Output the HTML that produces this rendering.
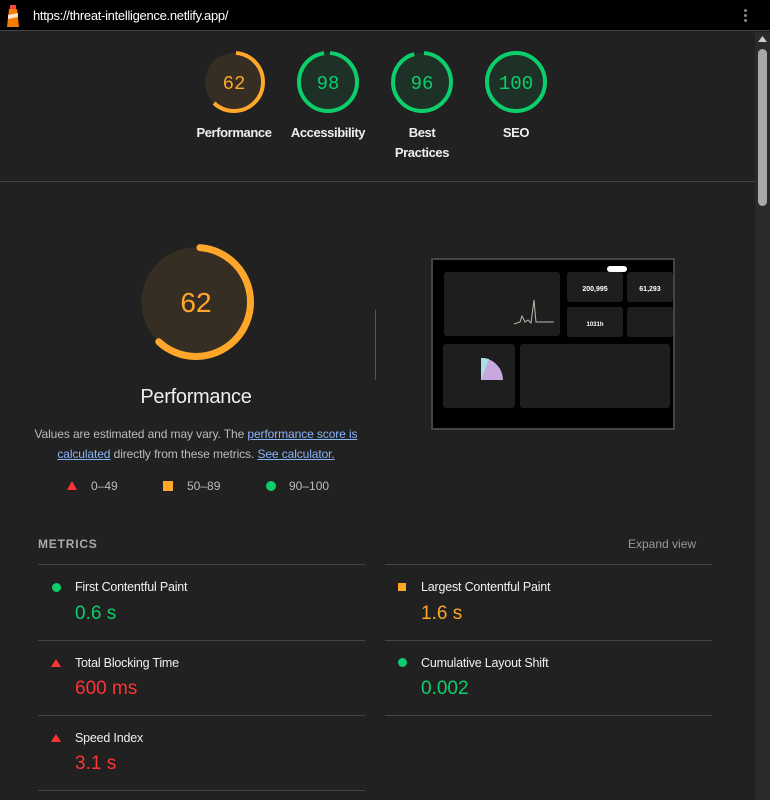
<!DOCTYPE html>
<html><head><meta charset="utf-8"><style>
*{margin:0;padding:0;box-sizing:border-box}
body{width:770px;height:800px;overflow:hidden;background:#212121;font-family:"Liberation Sans",sans-serif;color:#e8eaed;position:relative}
.a{position:absolute}
.top{left:0;top:0;width:770px;height:31px;background:#000;border-bottom:1px solid #444}
.lbl{font-size:13px;color:#eee;text-align:center;width:90px;line-height:20px;font-weight:bold;letter-spacing:-.4px}
.ml{font-size:12.5px;color:#f0f0f0;letter-spacing:-.2px}
.mv{font-size:19px}
.hr{height:1px;background:#444}
a{color:#8ab4f8;text-decoration:underline}
</style></head><body>
<div class="a top">
<svg class="a" style="left:6px;top:5px" width="14" height="22" viewBox="0 0 14 22"><rect x="4" y="0" width="6" height="4" fill="#f44"/><polygon points="3,4 11,4 13,22 1,22" fill="#f57c00"/><polygon points="2,10 12,8 12,12 2,14" fill="#fff" opacity=".8"/></svg>
<div class="a" style="left:33px;top:8px;font-size:13px;color:#fff;letter-spacing:-.3px">https://threat-intelligence.netlify.app/</div>
<div class="a" style="left:744px;top:9px;width:3px;height:3px;border-radius:2px;background:#888;box-shadow:0 5px 0 #888,0 10px 0 #888"></div>
</div>
<div class="a" style="left:755px;top:32px;width:15px;height:768px;background:#2a2a2a"></div>
<div class="a" style="left:758px;top:49px;width:9px;height:157px;border-radius:5px;background:#a8a8a8"></div>
<svg class="a" style="left:757px;top:35px" width="11" height="8"><polygon points="5.5,1 10,7 1,7" fill="#ccc"/></svg>

<svg class="a" style="left:0;top:0" width="755" height="400">
<g transform="rotate(-90 234 82)"><circle cx="234" cy="82" r="29" fill="#362e22" stroke="none"/><circle cx="234" cy="82" r="29" fill="none" stroke="#ffa62b" stroke-width="4" stroke-dasharray="111 200" stroke-dashoffset="-2"/></g>
<g transform="rotate(-90 328 82)"><circle cx="328" cy="82" r="29" fill="#1e3126"/><circle cx="328" cy="82" r="29" fill="none" stroke="#0cce6b" stroke-width="4" stroke-dasharray="176 200" stroke-dashoffset="-2"/></g>
<g transform="rotate(-90 422 82)"><circle cx="422" cy="82" r="29" fill="#1e3126"/><circle cx="422" cy="82" r="29" fill="none" stroke="#0cce6b" stroke-width="4" stroke-dasharray="172 200" stroke-dashoffset="-2"/></g>
<g transform="rotate(-90 516 82)"><circle cx="516" cy="82" r="29" fill="#1e3126"/><circle cx="516" cy="82" r="29" fill="none" stroke="#0cce6b" stroke-width="4"/></g>
<g font-family="Liberation Mono,monospace" font-size="19" text-anchor="middle">
<text x="234" y="89" fill="#ffa62b">62</text><text x="328" y="89" fill="#0cce6b">98</text><text x="422" y="89" fill="#0cce6b">96</text><text x="516" y="89" fill="#0cce6b">100</text></g>
<g transform="rotate(-90 196 302)"><circle cx="196" cy="302" r="54.5" fill="#362e22"/><circle cx="196" cy="302" r="54.5" fill="none" stroke="#ffa62b" stroke-width="7" stroke-linecap="round" stroke-dasharray="208 400" stroke-dashoffset="-4"/></g>
<text x="196" y="312" text-anchor="middle" font-size="28" fill="#ffa62b" font-family="Liberation Sans,sans-serif">62</text>
</svg>
<div class="a lbl" style="left:189px;top:123px">Performance</div>
<div class="a lbl" style="left:283px;top:123px">Accessibility</div>
<div class="a lbl" style="left:377px;top:123px">Best<br>Practices</div>
<div class="a lbl" style="left:471px;top:123px">SEO</div>
<div class="a hr" style="left:0;top:181px;width:755px"></div>

<div class="a" style="left:96px;top:386px;width:200px;text-align:center;font-size:20px;color:#eee;letter-spacing:-.3px">Performance</div>
<div class="a" style="left:30px;top:424px;width:332px;text-align:center;font-size:12px;line-height:20px;color:#bbb;letter-spacing:-.1px">Values are estimated and may vary. The <a>performance score is calculated</a> directly from these metrics. <a>See calculator.</a></div>
<svg class="a" style="left:67px;top:481px" width="12" height="10"><polygon points="5,0 10,9 0,9" fill="#f33"/></svg>
<div class="a" style="left:91px;top:479px;font-size:12px;color:#bbb">0–49</div>
<div class="a" style="left:163px;top:481px;width:10px;height:10px;background:#ffa62b"></div>
<div class="a" style="left:187px;top:479px;font-size:12px;color:#bbb">50–89</div>
<div class="a" style="left:266px;top:481px;width:10px;height:10px;border-radius:5px;background:#0cce6b"></div>
<div class="a" style="left:289px;top:479px;font-size:12px;color:#bbb">90–100</div>

<div class="a" style="left:375px;top:310px;width:1px;height:70px;background:#555"></div>
<div class="a" style="left:431px;top:258px;width:244px;height:172px;background:#000;border:2px solid #444">
<div class="a" style="left:11px;top:12px;width:116px;height:64px;background:#1e1e1e;border-radius:3px"></div>
<svg class="a" style="left:11px;top:12px" width="116" height="64"><polyline points="70,52 76,50 78,44 81,50 84,48 87,51 90,28 92,50 105,50 110,50" fill="none" stroke="#bba" stroke-width="1"/></svg>
<div class="a" style="left:134px;top:12px;width:56px;height:30px;background:#1e1e1e;border-radius:3px;color:#fff;font-size:7px;text-align:center;padding-top:14px;font-weight:bold">200,995</div>
<div class="a" style="left:194px;top:12px;width:46px;height:30px;background:#1e1e1e;border-radius:3px;color:#fff;font-size:7px;text-align:center;padding-top:14px;font-weight:bold">61,293</div>
<div class="a" style="left:134px;top:47px;width:56px;height:30px;background:#1e1e1e;border-radius:3px;color:#fff;font-size:6px;text-align:center;padding-top:15px;font-weight:bold">1031h</div>
<div class="a" style="left:194px;top:47px;width:46px;height:30px;background:#1e1e1e;border-radius:3px"></div>
<div class="a" style="left:174px;top:6px;width:20px;height:6px;background:#fff;border-radius:3px"></div>
<div class="a" style="left:10px;top:84px;width:72px;height:64px;background:#1e1e1e;border-radius:3px"></div>
<svg class="a" style="left:46px;top:96px" width="24" height="25"><path d="M2,24 L2,2 A22,22 0 0 1 24,24 Z" fill="#c9a8e0"/><path d="M2,24 L2,2 A22,22 0 0 1 10,3 Z" fill="#a8e0e8"/></svg>
<div class="a" style="left:87px;top:84px;width:150px;height:64px;background:#1e1e1e;border-radius:3px"></div>
</div>

<div class="a" style="left:38px;top:537px;font-size:12px;letter-spacing:.8px;color:#aaa;font-weight:bold">METRICS</div>
<div class="a" style="left:628px;top:537px;font-size:12px;color:#999">Expand view</div>
<div class="a hr" style="left:38px;top:564px;width:327px"></div>
<div class="a hr" style="left:385px;top:564px;width:327px"></div>
<div class="a hr" style="left:38px;top:640px;width:327px"></div>
<div class="a hr" style="left:385px;top:640px;width:327px"></div>
<div class="a hr" style="left:38px;top:715px;width:327px"></div>
<div class="a hr" style="left:385px;top:715px;width:327px"></div>
<div class="a hr" style="left:38px;top:790px;width:327px"></div>

<div class="a" style="left:52px;top:583px;width:9px;height:9px;border-radius:5px;background:#0cce6b"></div>
<div class="a ml" style="left:75px;top:580px">First Contentful Paint</div>
<div class="a mv" style="left:75px;top:603px;color:#0cce6b">0.6 s</div>
<div class="a" style="left:398px;top:583px;width:8px;height:8px;background:#ffa62b"></div>
<div class="a ml" style="left:421px;top:580px">Largest Contentful Paint</div>
<div class="a mv" style="left:421px;top:603px;color:#ffa62b">1.6 s</div>
<svg class="a" style="left:51px;top:659px" width="11" height="9"><polygon points="5,0 10,8 0,8" fill="#f33"/></svg>
<div class="a ml" style="left:75px;top:656px">Total Blocking Time</div>
<div class="a mv" style="left:75px;top:678px;color:#f33">600 ms</div>
<div class="a" style="left:398px;top:658px;width:9px;height:9px;border-radius:5px;background:#0cce6b"></div>
<div class="a ml" style="left:421px;top:656px">Cumulative Layout Shift</div>
<div class="a mv" style="left:421px;top:678px;color:#0cce6b">0.002</div>
<svg class="a" style="left:51px;top:734px" width="11" height="9"><polygon points="5,0 10,8 0,8" fill="#f33"/></svg>
<div class="a ml" style="left:75px;top:731px">Speed Index</div>
<div class="a mv" style="left:75px;top:753px;color:#f33">3.1 s</div>
</body></html>
